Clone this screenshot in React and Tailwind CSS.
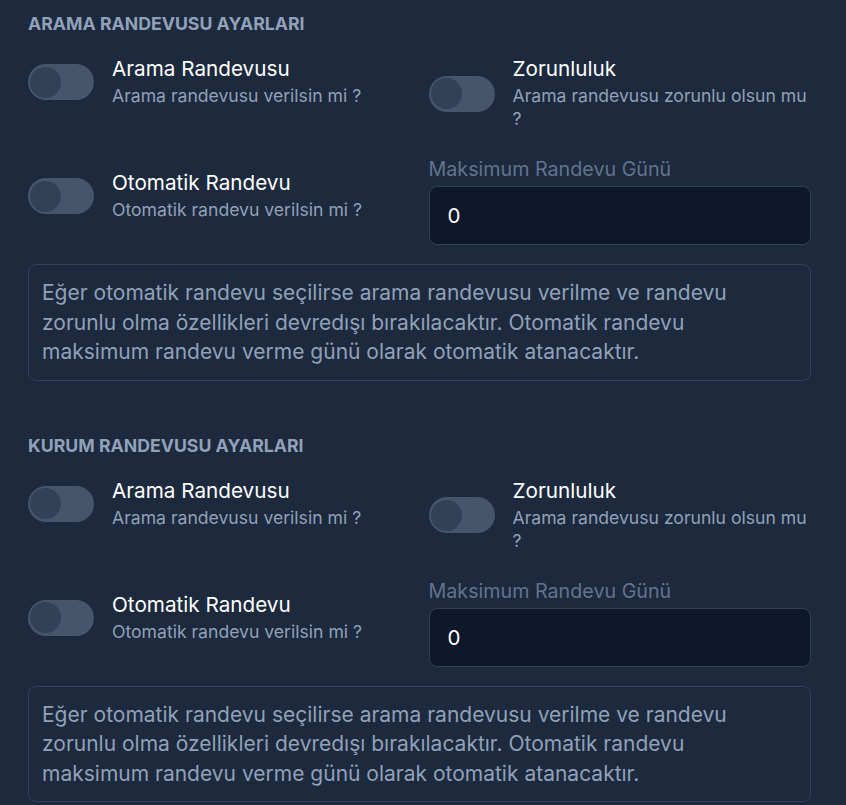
import { useState } from "react";

function Toggle({ checked, onChange }) {
  return (
    <button
      type="button"
      onClick={() => onChange(!checked)}
      className={`relative shrink-0 w-[66px] h-9 rounded-full transition ${
        checked ? "bg-blue-600" : "bg-slate-600"
      }`}
    >
      <span
        className={`absolute top-[2.5px] left-[2px] w-[31px] h-[31px] rounded-full transition ${
          checked ? "translate-x-[31px] bg-white" : "bg-slate-700"
        }`}
      />
    </button>
  );
}

function SwitchField({ title, description, checked, onChange }) {
  return (
    <div className="flex items-center gap-[18px]">
      <Toggle checked={checked} onChange={onChange} />
      <div className="flex flex-col">
        <span className="text-[20.7px] leading-6 text-white">{title}</span>
        <span className="text-[17.6px] leading-[23px] mt-[3px] text-slate-400">
          {description}
        </span>
      </div>
    </div>
  );
}

function AppointmentSection({ heading }) {
  const [appointment, setAppointment] = useState(false);
  const [required, setRequired] = useState(false);
  const [auto, setAuto] = useState(false);
  const [maxDay, setMaxDay] = useState("0");

  return (
    <section className="flex flex-col">
      <h2 className="text-[17.7px] font-bold uppercase text-slate-400 leading-6">
        {heading}
      </h2>

      <div className="grid grid-cols-2 items-start gap-x-[18px] gap-y-[27px] mt-[21px]">
        <SwitchField
          title="Arama Randevusu"
          description="Arama randevusu verilsin mi ?"
          checked={appointment}
          onChange={setAppointment}
        />
        <SwitchField
          title="Zorunluluk"
          description="Arama randevusu zorunlu olsun mu ?"
          checked={required}
          onChange={setRequired}
        />

        <div className="pt-[14px]">
          <SwitchField
            title="Otomatik Randevu"
            description="Otomatik randevu verilsin mi ?"
            checked={auto}
            onChange={setAuto}
          />
        </div>
        <div className="flex flex-col">
          <label className="text-[19.7px] leading-6 text-slate-500">
            Maksimum Randevu Günü
          </label>
          <input
            type="number"
            value={maxDay}
            onChange={(e) => setMaxDay(e.target.value)}
            className="mt-[5px] h-[59px] w-full rounded-lg border border-slate-700 bg-slate-900 px-[18px] text-[20.5px] text-white outline-none"
          />
        </div>
      </div>

      {/* Info note */}
      <div className="mt-[19px] rounded-lg border border-slate-700 px-[13px] pt-[13px] pb-[13px]">
        <p className="text-[21px] leading-[29.5px] text-slate-400">
          Eğer otomatik randevu seçilirse arama randevusu verilme ve randevu
          zorunlu olma özellikleri devredışı bırakılacaktır. Otomatik randevu
          maksimum randevu verme günü olarak otomatik atanacaktır.
        </p>
      </div>
    </section>
  );
}

export default function App() {
  return (
    <div
      className="min-h-screen bg-slate-800 px-[28px] pt-[12px] pb-8"
      style={{ fontFamily: "Inter, 'Noto Sans', sans-serif" }}
    >
      <div className="w-[783px] flex flex-col gap-[53px]">
        <AppointmentSection heading="Arama Randevusu Ayarları" />
        <AppointmentSection heading="Kurum Randevusu Ayarları" />
      </div>
    </div>
  );
}
